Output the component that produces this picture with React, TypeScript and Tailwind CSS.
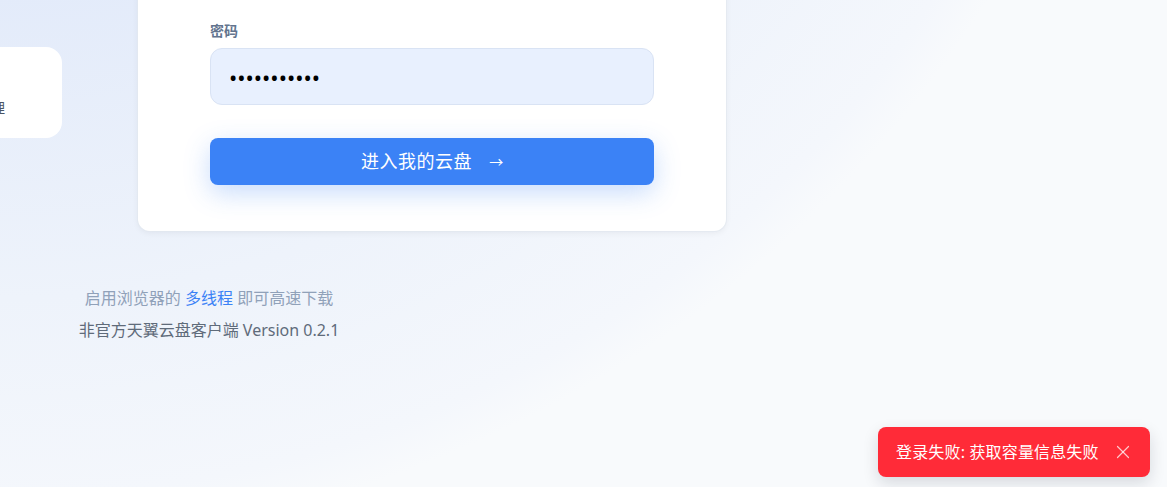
import { X } from 'lucide-react'

function Field({ label, type, value }: { label: string; type: string; value: string }) {
  return (
    <div>
      <label className="mb-[7px] block text-[14px] font-semibold leading-5 text-slate-500">{label}</label>
      <input
        type={type}
        value={value}
        readOnly
        className="h-[57px] w-full rounded-xl border border-[#d9e3f4] bg-[#e8f0fe] pr-5 pl-[18px] text-[22px] text-black outline-none"
      />
    </div>
  )
}

export default function App() {
  return (
    <div className="relative h-[487px] w-full overflow-hidden bg-[#f8fafc] bg-[radial-gradient(circle_1170px_at_0px_-626px,#d8e4fa_0%,#e3ebfa_53%,#eef3fb_79%,#f4f7fc_96%,#f8fafc_100%)] font-['Noto_Sans','Noto_Sans_CJK_SC',sans-serif]">
      <div className="-mt-[136px] -ml-[308px] flex w-[1034px] flex-col">
        <div className="flex items-start gap-[76px]">
          <div className="mt-[183px] flex h-[91px] w-[370px] flex-col items-end rounded-2xl bg-white pt-[51px] pr-[57px]">
            <p className="text-[14px] leading-5 text-gray-600">支持秒传与断点续传，文件集中管理</p>
          </div>

          <div className="w-[588px] rounded-xl bg-white px-[72px] pt-[49px] pb-[46px] shadow-[0_0_0_1px_rgba(226,232,240,0.7),0_2px_6px_rgba(15,23,42,0.06)]">
            <div className="mb-[24px]">
              <Field label="账号" type="text" value="13800000000" />
            </div>
            <Field label="密码" type="password" value="12345678901" />
            <button className="mt-[33px] flex h-[47px] w-full items-center justify-center rounded-lg bg-[#3b82f6] text-[18px] text-white shadow-[0_8px_26px_rgba(59,130,246,0.28)]">
              <span className="tracking-[0.03em]">进入我的云盘</span>
              <span className="ml-[17px] text-[14px]">→</span>
            </button>
          </div>
        </div>

        <footer className="mt-[55px] text-center">
          <p className="text-[16px] leading-6 text-slate-400">
            启用浏览器的 <span className="text-[#3b82f6]">多线程</span> 即可高速下载
          </p>
          <p className="mt-2 text-[16px] leading-6 text-[#5f6b7a]">非官方天翼云盘客户端 Version 0.2.1</p>
        </footer>
      </div>

      <div className="absolute right-[17px] bottom-[10px] flex h-[50px] w-[272px] items-center justify-between rounded-lg bg-[#ff2b38] pr-[16px] pl-[18px] shadow-[0_6px_16px_rgba(15,23,42,0.14)]">
        <span className="text-[16px] tracking-[0.01em] text-white">登录失败: 获取容量信息失败</span>
        <X className="h-[22px] w-[22px] text-white/75" strokeWidth={1.3} />
      </div>
    </div>
  )
}
